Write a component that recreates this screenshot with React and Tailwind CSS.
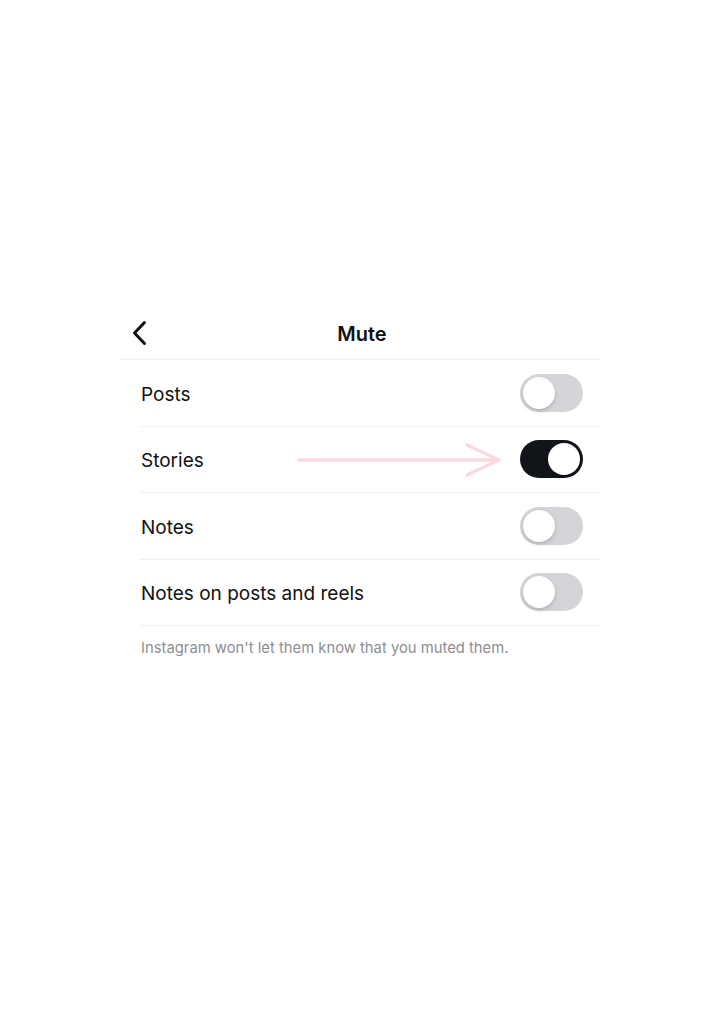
import { useState } from "react";

const ROWS = [
  { id: "posts", label: "Posts", on: false },
  { id: "stories", label: "Stories", on: true },
  { id: "notes", label: "Notes", on: false },
  { id: "notes-posts", label: "Notes on posts and reels", on: false },
];

function Toggle({ on, onChange }) {
  return (
    <button
      onClick={onChange}
      className={`relative mr-[17px] w-[63px] h-[38px] rounded-full flex items-center px-[3px] ${
        on ? "bg-[#11151a] justify-end" : "bg-[#d4d5d9] justify-start"
      }`}
    >
      <span className="w-[32px] h-[32px] rounded-full bg-white shadow-[0_2px_4px_rgba(0,0,0,0.18)]" />
    </button>
  );
}

export default function App() {
  const [state, setState] = useState(() =>
    Object.fromEntries(ROWS.map((r) => [r.id, r.on]))
  );

  return (
    <div
      className="min-h-screen bg-white pt-[306px]"
      style={{ fontFamily: "Inter, 'Noto Sans', sans-serif" }}
    >
      <div className="w-[480px] ml-[120px]">
        {/* header */}
        <div className="relative h-[54px] flex items-center justify-center border-b border-[#f1f1f1]">
          <button className="absolute left-[11px] top-[14px]">
            <svg width="18" height="26" viewBox="0 0 18 26" fill="none">
              <path
                d="M13.5 2.5 L3.5 13 L13.5 23.5"
                stroke="#111"
                strokeWidth="3"
                strokeLinecap="round"
                strokeLinejoin="round"
              />
            </svg>
          </button>
          <h1 className="text-[20px] font-semibold text-[#111] translate-x-[2px] translate-y-[1px]">
            Mute
          </h1>
        </div>

        {/* toggles */}
        <div className="pl-[20px]">
          {ROWS.map((r) => (
            <div
              key={r.id}
              className="relative h-[66.5px] flex items-center justify-between border-b border-[#f1f1f1]"
            >
              <span className="text-[19px] text-[#111] pl-[1px] translate-y-[1.5px]">{r.label}</span>
              {r.id === "stories" && (
                <svg
                  className="absolute left-[157px] top-[15px]"
                  width="206"
                  height="36"
                  viewBox="0 0 206 36"
                  fill="none"
                >
                  <path
                    d="M2 18 H201 M170 3 L202 18 L170 33"
                    stroke="#fbd9e1"
                    strokeWidth="3.5"
                    strokeLinecap="round"
                    strokeLinejoin="round"
                  />
                </svg>
              )}
              <Toggle
                on={state[r.id]}
                onChange={() => setState((s) => ({ ...s, [r.id]: !s[r.id] }))}
              />
            </div>
          ))}
          <p className="pt-[11px] pl-[1px] text-[14.8px] text-[#8e8e93]">
            Instagram won't let them know that you muted them.
          </p>
        </div>
      </div>
    </div>
  );
}
